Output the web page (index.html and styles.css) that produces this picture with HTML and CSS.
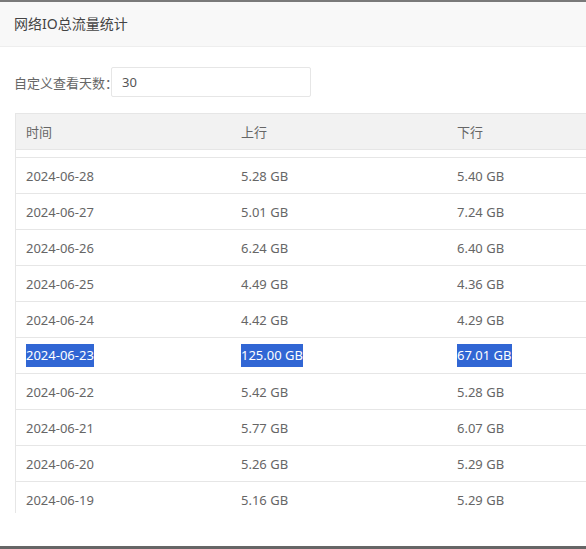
FILE: index.html
```html
<!DOCTYPE html>
<html lang="zh-CN">
<head>
  <meta charset="UTF-8">
  <meta name="viewport" content="width=device-width, initial-scale=1.0">
  <title>网络IO总流量统计</title>
  <link rel="stylesheet" href="styles.css">
</head>
<body>
  <div class="panel">
    <div class="panel-header">网络IO总流量统计</div>
    <div class="panel-body">
      <div class="form-row">
        <label class="form-label" for="days">自定义查看天数：</label>
        <input class="form-input" id="days" type="text" value="30">
      </div>
      <div class="table-box">
        <div class="table-head">
          <div class="cell">时间</div>
          <div class="cell">上行</div>
          <div class="cell">下行</div>
        </div>
        <div class="table-body">
          <!-- bottom edge of the row scrolled out of view -->
          <div class="row-edge"></div>
          <div class="row"><div class="cell">2024-06-28</div><div class="cell">5.28 GB</div><div class="cell">5.40 GB</div></div>
          <div class="row"><div class="cell">2024-06-27</div><div class="cell">5.01 GB</div><div class="cell">7.24 GB</div></div>
          <div class="row"><div class="cell">2024-06-26</div><div class="cell">6.24 GB</div><div class="cell">6.40 GB</div></div>
          <div class="row"><div class="cell">2024-06-25</div><div class="cell">4.49 GB</div><div class="cell">4.36 GB</div></div>
          <div class="row"><div class="cell">2024-06-24</div><div class="cell">4.42 GB</div><div class="cell">4.29 GB</div></div>
          <div class="row"><div class="cell"><span class="sel">2024-06-23</span></div><div class="cell"><span class="sel">125.00 GB</span></div><div class="cell"><span class="sel">67.01 GB</span></div></div>
          <div class="row"><div class="cell">2024-06-22</div><div class="cell">5.42 GB</div><div class="cell">5.28 GB</div></div>
          <div class="row"><div class="cell">2024-06-21</div><div class="cell">5.77 GB</div><div class="cell">6.07 GB</div></div>
          <div class="row"><div class="cell">2024-06-20</div><div class="cell">5.26 GB</div><div class="cell">5.29 GB</div></div>
          <div class="row"><div class="cell">2024-06-19</div><div class="cell">5.16 GB</div><div class="cell">5.29 GB</div></div>
        </div>
      </div>
    </div>
  </div>
</body>
</html>
```

FILE: styles.css
```css
* {
  margin: 0;
  padding: 0;
  box-sizing: border-box;
}

html,
body {
  height: 100%;
  overflow: hidden;
}

body {
  font-family: "Noto Sans", "Noto Sans CJK SC", sans-serif;
  font-size: 13px;
  color: #666;
  background-color: #fff;
}

.panel {
  height: 549px;
  border-top: 2px solid #7a7a7a;
  border-bottom: 3px solid #666;
  overflow: hidden;
}

.panel-header {
  height: 45px;
  line-height: 44px;
  padding-left: 14px;
  font-size: 14px;
  color: #444;
  background-color: #f8f8f8;
  border-bottom: 1px solid #eee;
}

.panel-body {
  padding: 20px 0 0 15px;
}

.form-row {
  display: flex;
  align-items: center;
  height: 30px;
}

.form-label {
  width: 97px;
  margin-left: -1px;
  color: #666;
  white-space: nowrap;
}

.form-input {
  width: 200px;
  height: 30px;
  padding-left: 10px;
  font-family: inherit;
  font-size: 13px;
  color: #555;
  border: 1px solid #e6e6e6;
  border-radius: 2px;
  outline: none;
}

.table-box {
  width: 660px;
  margin-top: 16px;
  border-top: 1px solid #e6e6e6;
  border-left: 1px solid #e6e6e6;
}

.table-head {
  display: flex;
  height: 36px;
  align-items: center;
  background-color: #f2f2f2;
  border-bottom: 1px solid #e6e6e6;
}

.table-body {
  height: 363px;
  overflow: hidden;
}

.row-edge {
  height: 8px;
  border-bottom: 1px solid #e6e6e6;
}

.row {
  display: flex;
  align-items: center;
  height: 36px;
  border-bottom: 1px solid #e6e6e6;
}

.cell {
  padding-left: 10px;
  width: 215px;
  flex-shrink: 0;
}

.cell:nth-child(2) {
  width: 216px;
}

.sel {
  display: inline-block;
  line-height: 23px;
  color: #fff;
  background-color: #3166d4;
}
```
